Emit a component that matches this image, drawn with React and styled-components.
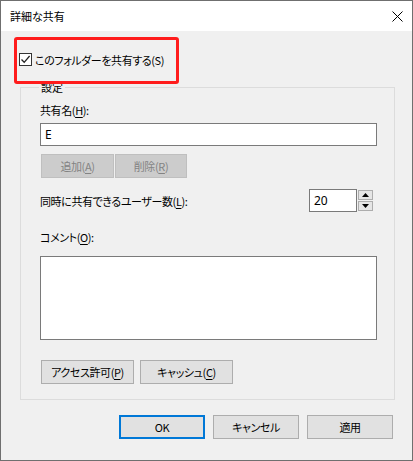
import React from 'react';
import styled, { createGlobalStyle } from 'styled-components';

const GlobalStyle = createGlobalStyle`
  html, body {
    margin: 0;
    padding: 0;
    background: #f0f0f0;
  }
  * {
    box-sizing: border-box;
  }
`;

const Window = styled.div`
  width: 413px;
  height: 461px;
  border: 1px solid #6f6f6f;
  background: #f0f0f0;
  font-family: "Noto Sans CJK JP", "Noto Sans", sans-serif;
  font-feature-settings: "palt";
  font-size: 11px;
  letter-spacing: -0.4px;
  color: #000;
  position: relative;
  display: flex;
  flex-direction: column;
`;

const TitleBar = styled.div`
  height: 30px;
  background: #fff;
  display: flex;
  align-items: center;
  justify-content: space-between;
  padding: 0 9px 0 9px;
`;

const Title = styled.span`
  font-size: 11px;
  line-height: 16px;
  letter-spacing: 0;
`;

const CloseButton = styled.div`
  width: 12px;
  height: 12px;
  display: flex;
  align-items: center;
  justify-content: center;
`;

const Body = styled.div`
  padding: 22px 17px 0 18px;
`;

const CheckRow = styled.label`
  display: flex;
  align-items: center;
  height: 13px;
  gap: 3px;
  line-height: 16px;
`;

const CheckBox = styled.span`
  width: 13px;
  height: 13px;
  border: 1px solid #333;
  background: #fff;
  display: flex;
  align-items: center;
  justify-content: center;
`;

const Highlight = styled.div`
  position: absolute;
  left: 13px;
  top: 36px;
  width: 165px;
  height: 47px;
  border: 3px solid #ff1c1c;
  border-radius: 3px;
  pointer-events: none;
  z-index: 2;
`;

const GroupBox = styled.fieldset`
  margin: 14px 0 0 1px;
  width: 375px;
  border: 1px solid #dcdcdc;
  padding: 8px 17px 15px 19px;
  min-width: 0;
`;

const Legend = styled.legend`
  padding: 0 2px;
  margin-left: -1px;
  line-height: 14px;
  letter-spacing: 0;
`;

const FieldLabel = styled.div`
  line-height: 16px;
  margin-top: ${({ $top }) => $top || 0}px;
`;

const Key = styled.span`
  text-decoration: underline;
  text-underline-offset: 2px;
`;

const TextInput = styled.div`
  margin-top: 5px;
  width: 337px;
  height: 23px;
  border: 1px solid #7a7a7a;
  background: #fff;
  padding: 0 4px;
  display: flex;
  align-items: center;
  font-size: 12px;
  letter-spacing: 0;
  font-family: "Noto Sans", "Noto Sans CJK JP", sans-serif;
`;

const ButtonRow = styled.div`
  display: flex;
  gap: ${({ $gap }) => $gap}px;
  margin: ${({ $top }) => $top}px 0 0 1px;
`;

const Button = styled.div`
  width: ${({ $w }) => $w || 86}px;
  height: 24px;
  display: flex;
  align-items: center;
  justify-content: center;
  background: ${({ $disabled }) => ($disabled ? '#cccccc' : '#e1e1e1')};
  color: ${({ $disabled }) => ($disabled ? '#838383' : '#000')};
  border: ${({ $default, $disabled }) =>
    $default ? '2px solid #0078d7' : $disabled ? '1px solid #bfbfbf' : '1px solid #adadad'};
  line-height: 16px;
`;

const SpinRow = styled.div`
  margin-top: 11px;
  display: flex;
  align-items: center;
  justify-content: space-between;
  padding-right: 3px;
`;

const Spin = styled.div`
  display: flex;
  align-items: center;
`;

const SpinInput = styled.div`
  width: 48px;
  height: 23px;
  border: 1px solid #7a7a7a;
  background: #fff;
  padding: 0 4px;
  display: flex;
  align-items: center;
  font-size: 12px;
  letter-spacing: 0;
  font-family: "Noto Sans", sans-serif;
`;

const SpinButtons = styled.div`
  display: flex;
  flex-direction: column;
  width: 17px;
  height: 23px;
  padding: 1px;
  gap: 1px;
`;

const SpinButton = styled.div`
  flex: 1;
  background: #e5e5e5;
  border: 1px solid #adadad;
  display: flex;
  align-items: center;
  justify-content: center;
`;

const TextArea = styled.div`
  margin-top: 11px;
  width: 337px;
  height: 84px;
  border: 1px solid #7a7a7a;
  background: #fff;
`;

const Footer = styled.div`
  display: flex;
  justify-content: flex-end;
  margin-top: 15px;
  padding-right: 2px;
  gap: 8px;
`;

const Arrow = ({ up }) => (
  <svg width="7" height="4" viewBox="0 0 7 4">
    <path d={up ? 'M0 4 L3.5 0 L7 4 Z' : 'M0 0 L3.5 4 L7 0 Z'} fill="#000" />
  </svg>
);

export default function App() {
  return (
    <>
      <GlobalStyle />
      <Window>
        <TitleBar>
          <Title>詳細な共有</Title>
          <CloseButton>
            <svg width="11" height="11" viewBox="0 0 11 11">
              <path d="M0.5 0.5 L10.5 10.5 M10.5 0.5 L0.5 10.5" stroke="#000" strokeWidth="1" />
            </svg>
          </CloseButton>
        </TitleBar>
        <Highlight />
        <Body>
          <CheckRow>
            <CheckBox>
              <svg width="11" height="11" viewBox="0 0 11 11">
                <path d="M1.5 5.5 L4.2 8.3 L9.6 2" stroke="#222" strokeWidth="1.3" fill="none" />
              </svg>
            </CheckBox>
            このフォルダーを共有する(S)
          </CheckRow>

          <GroupBox>
            <Legend>設定</Legend>
            <FieldLabel>共有名(<Key>H</Key>):</FieldLabel>
            <TextInput>E</TextInput>
            <ButtonRow $top={8} $gap={1}>
              <Button $w={73} $disabled>追加(<Key>A</Key>)</Button>
              <Button $w={72} $disabled>削除(<Key>R</Key>)</Button>
            </ButtonRow>
            <SpinRow>
              <span>同時に共有できるユーザー数(<Key>L</Key>):</span>
              <Spin>
                <SpinInput>20</SpinInput>
                <SpinButtons>
                  <SpinButton><Arrow up /></SpinButton>
                  <SpinButton><Arrow /></SpinButton>
                </SpinButtons>
              </Spin>
            </SpinRow>
            <FieldLabel $top={17}>コメント(<Key>O</Key>):</FieldLabel>
            <TextArea />
            <ButtonRow $top={20} $gap={6}>
              <Button $w={93}>アクセス許可(<Key>P</Key>)</Button>
              <Button $w={93}>キャッシュ(<Key>C</Key>)</Button>
            </ButtonRow>
          </GroupBox>

          <Footer>
            <Button $default>OK</Button>
            <Button>キャンセル</Button>
            <Button>適用</Button>
          </Footer>
        </Body>
      </Window>
    </>
  );
}
